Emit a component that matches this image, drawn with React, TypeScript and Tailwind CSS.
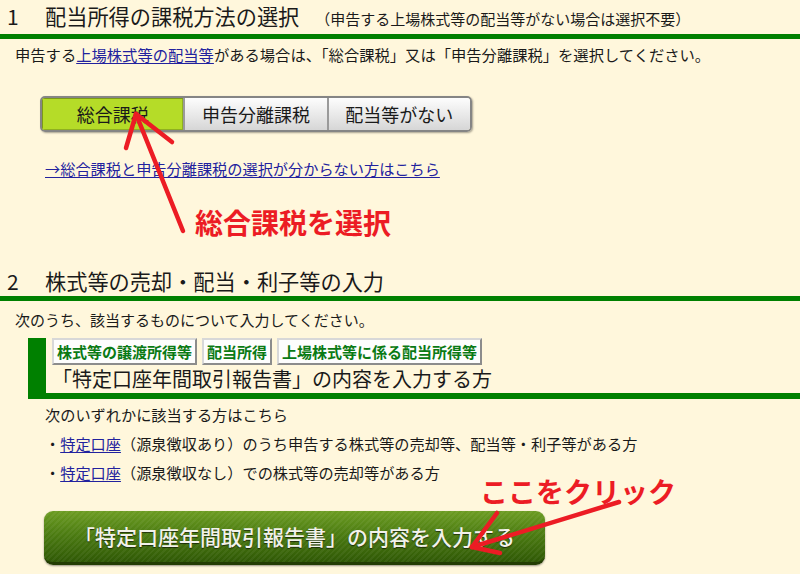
import React from "react";

const Heading = ({ num, title, note }: { num: string; title: string; note?: string }) => (
  <div>
    <div className="flex items-baseline pb-[1px] pl-[7px] pt-[2px] leading-[28px] text-[#1a1a1a]">
      <span className="w-[38px] text-[21px]">{num}</span>
      <span className="text-[21.2px]">{title}</span>
      {note && <span className="ml-[16px] text-[15px]">{note}</span>}
    </div>
    <div className="h-[5px] bg-[#008000]" />
  </div>
);

const Tag = ({ label }: { label: string }) => (
  <div className="flex h-[27px] items-center border-2 border-t-[#d8d8d8] border-l-[#d8d8d8] border-r-[#8c8c8c] border-b-[#8c8c8c] bg-[#fdfdfd] px-[3px] text-[15px] font-bold leading-[23px] text-[#0a7a14]">
    {label}
  </div>
);

const TaxLink = () => (
  <span className="text-[#22229e] underline underline-offset-2">特定口座</span>
);

export default function App() {
  return (
    <div className="relative h-[574px] w-[800px] overflow-hidden bg-[#fff7dc] font-['Noto_Sans_CJK_JP','Noto_Sans',sans-serif] text-[#1a1a1a]">
      {/* 1 */}
      <Heading num="1" title="配当所得の課税方法の選択" note="（申告する上場株式等の配当等がない場合は選択不要）" />
      <p className="mt-[4px] pl-[15px] text-[15.3px] leading-[22px]">
        申告する<span className="text-[#22229e] underline underline-offset-2">上場株式等の配当等</span>
        がある場合は、「総合課税」又は「申告分離課税」を選択してください。
      </p>

      <div className="ml-[40px] mt-[31px] flex h-[36px] w-[432px] overflow-hidden rounded-[5px] border-2 border-[#858585] shadow-[1px_1px_2px_rgba(0,0,0,0.35)]">
        <div className="flex flex-1 items-center justify-center bg-[#b5dc28] text-[18px] text-[#1a1a1a] shadow-[inset_1px_1px_0_#7d9a18,inset_-1px_-1px_0_#8fb020]">
          総合課税
        </div>
        <div className="flex flex-1 items-center justify-center border-l-2 border-[#9a9a9a] bg-[linear-gradient(to_bottom,#fdfdfd,#e6e6e6_60%,#d6d6d6)] text-[18px] text-[#1a1a1a]">
          申告分離課税
        </div>
        <div className="flex flex-1 items-center justify-center border-l-2 border-[#9a9a9a] bg-[linear-gradient(to_bottom,#fdfdfd,#e6e6e6_60%,#d6d6d6)] text-[18px] text-[#1a1a1a]">
          配当等がない
        </div>
      </div>

      <p className="mt-[25px] pl-[45px] text-[15.2px] leading-[22px] text-[#22229e] underline underline-offset-2">
        →総合課税と申告分離課税の選択が分からない方はこちら
      </p>

      <p className="ml-[195px] mt-[26px] text-[28px] font-bold leading-[34px] text-[#ec1c24]">総合課税を選択</p>

      {/* 2 */}
      <div className="mt-[26px]">
        <Heading num="2" title="株式等の売却・配当・利子等の入力" />
      </div>
      <p className="mt-[8px] pl-[15px] text-[15px] leading-[22px]">次のうち、該当するものについて入力してください。</p>

      <div className="ml-[28px] mt-[7px] border-b-[6px] border-l-[18px] border-[#008000] pl-[6px]">
        <div className="flex gap-[5px]">
          <Tag label="株式等の譲渡所得等" />
          <Tag label="配当所得" />
          <Tag label="上場株式等に係る配当所得等" />
        </div>
        <div className="text-[20px] leading-[28px]">「特定口座年間取引報告書」の内容を入力する方</div>
      </div>

      <div className="mt-[1px] pl-[45px] text-[15.2px] leading-[29px]">
        <p>次のいずれかに該当する方はこちら</p>
        <p>
          ・<TaxLink />（源泉徴収あり）のうち申告する株式等の売却等、配当等・利子等がある方
        </p>
        <p>
          ・<TaxLink />（源泉徴収なし）での株式等の売却等がある方
        </p>
      </div>

      <div className="ml-[44px] mt-[24px] flex h-[54px] w-[501px] items-center justify-center rounded-[9px] border-b-[3px] border-[#233d03] bg-[repeating-linear-gradient(135deg,rgba(255,255,255,0.05)_0px,rgba(255,255,255,0.05)_2px,transparent_2px,transparent_4px),linear-gradient(to_bottom,#6c9c22,#4c7c12_45%,#2f5805)] text-[21px] font-medium text-[#f2f2ea] shadow-[0_1px_2px_rgba(0,0,0,0.4)] [text-shadow:0_1px_1px_rgba(0,0,0,0.6)]">
        「特定口座年間取引報告書」の内容を入力する
      </div>

      {/* annotations */}
      <p className="absolute left-[480px] top-[474px] text-[28px] font-bold leading-[34px] text-[#ec1c24]">ここをクリック</p>
      <svg className="pointer-events-none absolute left-0 top-0" width="800" height="574" viewBox="0 0 800 574">
        <g stroke="#ec1c24" strokeWidth="4.5" strokeLinecap="round" fill="none">
          <line x1="183" y1="231" x2="136" y2="114" />
          <line x1="136" y1="114" x2="126" y2="148" />
          <line x1="136" y1="114" x2="172" y2="142" />
          <line x1="619" y1="502" x2="472" y2="547" />
          <line x1="472" y1="547" x2="497" y2="513" />
          <line x1="472" y1="547" x2="500" y2="553" />
        </g>
      </svg>
    </div>
  );
}
